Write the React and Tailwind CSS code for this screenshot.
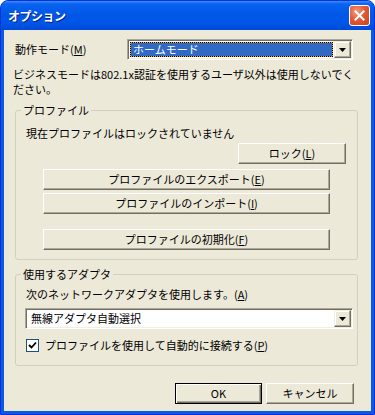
import React from 'react';

function Btn({ children, className = '', isDefault = false }) {
  const edge = isDefault
    ? 'border-black shadow-[inset_1px_1px_0_#fff,inset_-1px_-1px_0_#716F64,inset_-2px_-2px_0_#ACA899]'
    : 'border-t-white border-l-white border-r-[#716F64] border-b-[#716F64] shadow-[inset_-1px_-1px_0_#ACA899]';
  return (
    <div className={`flex h-[21px] items-center justify-center border bg-[#ECE9D8] text-[11px] leading-none text-black ${edge} ${className}`}>
      {children}
    </div>
  );
}

function Arrow() {
  return (
    <div className="flex w-[17px] items-center justify-center border border-t-[#F1EFE2] border-l-[#F1EFE2] border-r-[#716F64] border-b-[#716F64] bg-[#ECE9D8] shadow-[inset_-1px_-1px_0_#ACA899,inset_1px_1px_0_#fff]">
      <svg width="7" height="4" viewBox="0 0 7 4">
        <path d="M0 0h7L3.5 4z" fill="#000" />
      </svg>
    </div>
  );
}

function Combo({ children, selected = false, className = '' }) {
  return (
    <div className={`flex h-[21px] border border-t-[#ACA899] border-l-[#ACA899] border-r-white border-b-white bg-white p-[1px] shadow-[inset_1px_1px_0_#716F64,inset_-1px_-1px_0_#F1EFE2] ${className}`}>
      <div className="flex flex-1 p-[1px]">
        {selected ? (
          <div className="flex flex-1 bg-[#E3A73A]">
            <div className="flex flex-1 items-center border border-dotted border-black bg-[#316AC5] bg-clip-padding pl-[2px] text-[11px] text-white">
              {children}
            </div>
          </div>
        ) : (
          <div className="flex flex-1 items-center pl-[3px] text-[11px] text-black">{children}</div>
        )}
      </div>
      <Arrow />
    </div>
  );
}

function Group({ title, children, className = '' }) {
  return (
    <fieldset className={`rounded-[3px] border border-[#D0D0BF] ${className}`}>
      <legend className="ml-[5px] px-[2px] text-[11px] leading-[15px] text-black">{title}</legend>
      {children}
    </fieldset>
  );
}

export default function App() {
  return (
    <div className="h-[415px] w-[375px] bg-white font-['Noto_Sans_CJK_JP','Noto_Sans',sans-serif]">
      <div className="flex h-full flex-col overflow-hidden rounded-t-[8px] border border-[#0831D9] bg-[#0A5AE6]">
        <div className="flex h-[29px] shrink-0 items-center bg-[linear-gradient(180deg,#3C8FFF_0%,#0A62F0_10%,#0058E8_45%,#0055E5_80%,#0048D8_100%)] pl-[7px] pr-[4px]">
          <span className="text-[12px] font-bold tracking-[-0.5px] text-white [text-shadow:1px_1px_0_#0A1E8A]">オプション</span>
          <div className="ml-auto flex h-[21px] w-[21px] items-center justify-center rounded-[3px] border border-white bg-[radial-gradient(circle_at_35%_30%,#F29C80_0%,#E35B35_45%,#C9401E_100%)]">
            <svg width="11" height="11" viewBox="0 0 11 11">
              <path d="M1.5 1.5l8 8M9.5 1.5l-8 8" stroke="#fff" strokeWidth="2" strokeLinecap="square" />
            </svg>
          </div>
        </div>
        <div className="mx-[3px] mb-[3px] flex flex-1 flex-col bg-[#ECE9D8] px-[11px] pt-[9px] text-[11px] text-black">
          <div className="flex h-[21px] items-center">
            <span className="w-[112px] leading-none">
              動作モード(<span className="underline">M</span>)
            </span>
            <Combo selected className="w-[226px]">ホームモード</Combo>
          </div>
          <p className="ml-[-2px] mt-[7px] leading-[15px]">
            ビジネスモードは802.1x認証を使用するユーザ以外は使用しないでく
            <br />
            ださい。
          </p>
          <Group title="プロファイル" className="mt-[6px] w-[343px] pb-[9px]">
            <div className="pl-[10px] pt-[8px] leading-[15px]">現在プロファイルはロックされていません</div>
            <div className="mt-[2px] flex justify-end pr-[11px]">
              <Btn className="w-[108px]">
                ロック(<span className="underline">L</span>)
              </Btn>
            </div>
            <Btn className="ml-[27px] mt-[5px] w-[287px]">
              プロファイルのエクスポート(<span className="underline">E</span>)
            </Btn>
            <Btn className="ml-[27px] mt-[3px] w-[287px]">
              プロファイルのインポート(<span className="underline">I</span>)
            </Btn>
            <Btn className="ml-[27px] mt-[15px] w-[287px]">
              プロファイルの初期化(<span className="underline">F</span>)
            </Btn>
          </Group>
          <Group title="使用するアダプタ" className="mt-[7px] w-[343px] pb-[12px]">
            <div className="pl-[10px] pt-[5px] leading-[15px]">
              次のネットワークアダプタを使用します。(<span className="underline">A</span>)
            </div>
            <Combo className="ml-[9px] mt-[6px] w-[328px]">無線アダプタ自動選択</Combo>
            <div className="ml-[10px] mt-[9px] flex items-center">
              <div className="flex h-[13px] w-[13px] items-center justify-center border border-[#1C5180] bg-white">
                <svg width="9" height="9" viewBox="0 0 9 9">
                  <path d="M1 4l2.5 2.5L8 1.5" stroke="#000" strokeWidth="1.8" fill="none" />
                </svg>
              </div>
              <span className="ml-[6px] leading-[15px]">
                プロファイルを使用して自動的に接続する(<span className="underline">P</span>)
              </span>
            </div>
          </Group>
          <div className="mt-[17px] flex justify-end gap-[4px] pr-[6px]">
            <Btn isDefault className="w-[87px]">OK</Btn>
            <Btn className="w-[88px]">キャンセル</Btn>
          </div>
        </div>
      </div>
    </div>
  );
}
